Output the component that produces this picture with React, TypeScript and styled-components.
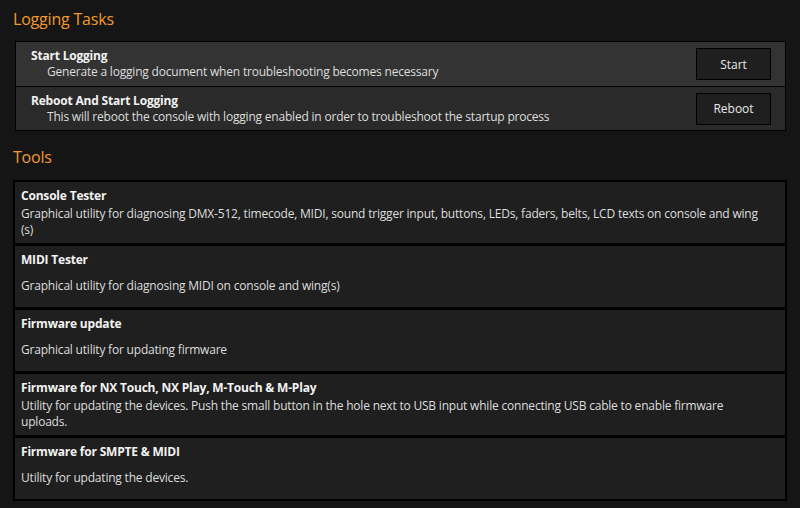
import React from 'react';
import styled, {createGlobalStyle} from "styled-components";

const GlobalStyle = createGlobalStyle`
  body {
    margin: 0;
    background: #151515;
    font-family: "Open Sans", "Noto Sans", sans-serif;
    color: #dedede;
  }
`

const CSSPage = styled.div`
  width: 800px;
  height: 508px;
  overflow: hidden;
  box-sizing: border-box;
  padding-top: 8px;
`

const CSSHeading = styled.h2<{ $top?: number }>`
  margin: ${p => p.$top || 0}px 0 0 13px;
  height: 22px;
  font-size: 16px;
  line-height: 22px;
  font-weight: 400;
  color: #f39a2e;
  letter-spacing: -0.2px;
`

const CSSLogPanel = styled.div`
  margin: 11px 14px 0 15px;
  border: 1px solid #000;
`

const CSSLogRow = styled.div<{ $light?: boolean }>`
  display: flex;
  align-items: center;
  height: 44px;
  padding: 0 14px 0 15px;
  background: ${p => p.$light ? '#333333' : '#2a2a2a'};

  & + & {
    border-top: 1px solid #000;
    height: 43px;
  }
`

const CSSLogText = styled.div`
  flex: 1;
  font-size: 12px;
  line-height: 16px;
  letter-spacing: -0.2px;

  .title {
    font-weight: 700;
    color: #f2f2f2;
  }

  .text {
    padding-left: 16px;
  }
`

const CSSButton = styled.button`
  width: 75px;
  height: 32px;
  background: #1f1f1f;
  border: 1px solid #000;
  color: #e8e8e8;
  font-family: inherit;
  font-size: 12px;
  padding: 0;
  cursor: pointer;
`

const CSSToolList = styled.div`
  margin: 12px 13px 0 13px;
  background: #000;
  padding: 2px;
  display: flex;
  flex-direction: column;
  gap: 3px;
`

const CSSTool = styled.div`
  background: #1f1f1f;
  height: 61px;
  box-sizing: border-box;
  padding: 6px 20px 0 6px;
  font-size: 12px;
  line-height: 16px;
  letter-spacing: -0.2px;

  .title {
    font-weight: 700;
    color: #f2f2f2;
  }

  .text {
    margin-top: 2px;
    height: 32px;
    display: flex;
    align-items: center;
  }
`

const logTasks = [
    {title: 'Start Logging', text: 'Generate a logging document when troubleshooting becomes necessary', button: 'Start'},
    {
        title: 'Reboot And Start Logging',
        text: 'This will reboot the console with logging enabled in order to troubleshoot the startup process',
        button: 'Reboot'
    },
]

const tools = [
    {
        title: 'Console Tester',
        text: 'Graphical utility for diagnosing DMX-512, timecode, MIDI, sound trigger input, buttons, LEDs, faders, belts, LCD texts on console and wing\u200B(s)'
    },
    {title: 'MIDI Tester', text: 'Graphical utility for diagnosing MIDI on console and wing(s)'},
    {title: 'Firmware update', text: 'Graphical utility for updating firmware'},
    {
        title: 'Firmware for NX Touch, NX Play, M-Touch & M-Play',
        text: 'Utility for updating the devices. Push the small button in the hole next to USB input while connecting USB cable to enable firmware uploads.'
    },
    {title: 'Firmware for SMPTE & MIDI', text: 'Utility for updating the devices.'},
]

const App = () => {
    return (
        <CSSPage>
            <GlobalStyle/>
            <CSSHeading>Logging Tasks</CSSHeading>
            <CSSLogPanel>
                {logTasks.map((task, i) => (
                    <CSSLogRow key={task.title} $light={i === 0}>
                        <CSSLogText>
                            <div className="title">{task.title}</div>
                            <div className="text">{task.text}</div>
                        </CSSLogText>
                        <CSSButton>{task.button}</CSSButton>
                    </CSSLogRow>
                ))}
            </CSSLogPanel>
            <CSSHeading $top={15}>Tools</CSSHeading>
            <CSSToolList>
                {tools.map(tool => (
                    <CSSTool key={tool.title}>
                        <div className="title">{tool.title}</div>
                        <div className="text"><span>{tool.text}</span></div>
                    </CSSTool>
                ))}
            </CSSToolList>
        </CSSPage>
    );
};

export default App;
